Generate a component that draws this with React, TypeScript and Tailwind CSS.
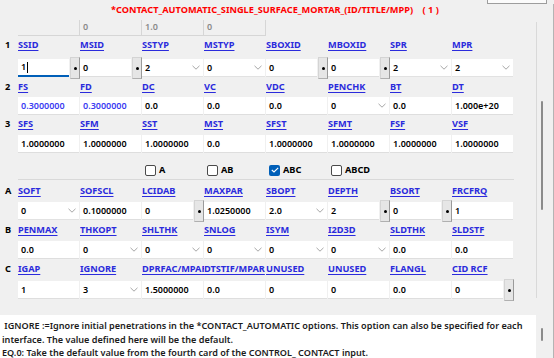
import React from 'react';

type Cell = {
  t: 'in' | 'sel';
  v: string;
  btn?: boolean;
  blue?: boolean;
  focus?: boolean;
};

type Row = {
  n: string;
  labels: string[];
  cells: Cell[];
  labelMt: string;
  inputMt: string;
};

const i = (v: string, extra: Partial<Cell> = {}): Cell => ({ t: 'in', v, ...extra });
const s = (v: string): Cell => ({ t: 'sel', v });

const topRows: Row[] = [
  {
    n: '1',
    labels: ['SSID', 'MSID', 'SSTYP', 'MSTYP', 'SBOXID', 'MBOXID', 'SPR', 'MPR'],
    cells: [i('1', { btn: true, focus: true }), i('0', { btn: true }), s('2'), s('0'), i('0', { btn: true }), i('0', { btn: true }), s('2'), s('2')],
    labelMt: 'mt-[2px]',
    inputMt: 'mt-[7px]',
  },
  {
    n: '2',
    labels: ['FS', 'FD', 'DC', 'VC', 'VDC', 'PENCHK', 'BT', 'DT'],
    cells: [i('0.3000000', { blue: true }), i('0.3000000', { blue: true }), i('0.0'), i('0.0'), i('0.0'), s('0'), i('0.0'), i('1.000e+20')],
    labelMt: 'mt-[3px]',
    inputMt: 'mt-[3px]',
  },
  {
    n: '3',
    labels: ['SFS', 'SFM', 'SST', 'MST', 'SFST', 'SFMT', 'FSF', 'VSF'],
    cells: [i('1.0000000'), i('1.0000000'), i('1.0000000'), i('0.0'), i('1.0000000'), i('1.0000000'), i('1.0000000'), i('1.0000000')],
    labelMt: 'mt-[2px]',
    inputMt: 'mt-[4px]',
  },
];

const optRows: Row[] = [
  {
    n: 'A',
    labels: ['SOFT', 'SOFSCL', 'LCIDAB', 'MAXPAR', 'SBOPT', 'DEPTH', 'BSORT', 'FRCFRQ'],
    cells: [s('0'), i('0.1000000'), i('0', { btn: true }), i('1.0250000'), s('2.0'), i('2', { btn: true }), i('0', { btn: true }), i('1')],
    labelMt: 'mt-[4px]',
    inputMt: 'mt-[4px]',
  },
  {
    n: 'B',
    labels: ['PENMAX', 'THKOPT', 'SHLTHK', 'SNLOG', 'ISYM', 'I2D3D', 'SLDTHK', 'SLDSTF'],
    cells: [i('0.0'), s('0'), s('0'), s('0'), s('0'), s('0'), i('0.0'), i('0.0')],
    labelMt: 'mt-[3px]',
    inputMt: 'mt-[4px]',
  },
  {
    n: 'C',
    labels: ['IGAP', 'IGNORE', 'DPRFAC/MPAR', 'DTSTIF/MPAR', 'UNUSED', 'UNUSED', 'FLANGL', 'CID RCF'],
    cells: [i('1'), s('3'), i('1.5000000'), i('0.0'), i('0'), i('0'), i('0.0'), i('0', { btn: true })],
    labelMt: 'mt-[3px]',
    inputMt: 'mt-[5px]',
  },
];

function Chevron() {
  return (
    <svg width="8" height="5" viewBox="0 0 8 5" fill="none">
      <path d="M0.5 0.8 L4 4.2 L7.5 0.8" stroke="#a6a6a6" strokeWidth="1" />
    </svg>
  );
}

function DotButton() {
  return (
    <div className="w-[10px] h-[22px] shrink-0 bg-[#e6e6e6] border border-[#d4d4d4] border-r-[#9a9a9a] border-b-[#b0b0b0] flex items-center justify-center">
      <span className="w-[3px] h-[3px] rounded-full bg-black" />
    </div>
  );
}

function Field({ cell }: { cell: Cell }) {
  if (cell.t === 'sel') {
    return (
      <div className="w-[61px] mr-[1px] h-[18px] bg-white border-b border-[#e2e2e2] flex items-center justify-between pl-[3px] pr-[3px]">
        <span className="text-black">{cell.v}</span>
        <Chevron />
      </div>
    );
  }
  return (
    <div className="w-[62px] flex items-center">
      <div
        className={`${cell.btn ? 'w-[51px]' : 'w-[61px]'} h-[18px] bg-white flex items-center pl-[3px] ${
          cell.focus ? 'border-b-2 border-[#005fb8]' : 'border-b border-[#dedede]'
        } ${cell.blue ? 'text-[#3b3bf2]' : 'text-black'}`}
      >
        <span>{cell.v}</span>
        {cell.focus && <span className="w-[1px] h-[11px] bg-black ml-[1px]" />}
      </div>
      {cell.btn && (
        <div className="ml-[1px]">
          <DotButton />
        </div>
      )}
    </div>
  );
}

function CardRow({ row }: { row: Row }) {
  return (
    <div>
      <div className={`${row.labelMt} flex h-[14px] leading-[14px] text-[9.2px]`}>
        <div className="w-[18px] pl-[5px] font-bold text-black">{row.n}</div>
        {row.labels.map((l, k) => (
          <div key={k} className="w-[62px] overflow-hidden whitespace-nowrap font-bold text-[#2b2bdc]">
            <span className="underline underline-offset-[2px]">{l}</span>
          </div>
        ))}
      </div>
      <div className={`${row.inputMt} flex h-[18px] items-center pl-[18px] font-semibold`}>
        {row.cells.map((c, k) => (
          <Field key={k} cell={c} />
        ))}
      </div>
    </div>
  );
}

function Check({ label, checked }: { label: string; checked?: boolean }) {
  return (
    <div className="w-[62px] flex items-center gap-[3px] pl-[2px]">
      {checked ? (
        <span className="w-[11px] h-[11px] rounded-[2px] bg-[#005fb8] flex items-center justify-center">
          <svg width="8" height="6" viewBox="0 0 8 6" fill="none">
            <path d="M0.8 3 L3 5 L7.2 0.8" stroke="white" strokeWidth="1.1" />
          </svg>
        </span>
      ) : (
        <span className="w-[11px] h-[11px] rounded-[2px] border border-[#4a4a4a] bg-white" />
      )}
      <span className="font-bold text-black">{label}</span>
    </div>
  );
}

export default function App() {
  return (
    <div className="w-[554px] h-[358px] bg-[#f0f0f0] overflow-hidden flex flex-col font-['Noto_Sans',sans-serif] text-[9px]">
      <div className="h-[4px] flex shrink-0">
        <div className="ml-[487px] w-[60px] h-[4px] bg-[#fbfbfb] border-x border-b border-[#9d9d9d]" />
      </div>
      <div className="flex h-[354px]">
        <div className="w-[536px] flex flex-col">
          <div className="h-[16px] leading-[12px] pl-[111px] text-[9.2px] font-bold text-[#ff0000] whitespace-pre">
            {'*CONTACT_AUTOMATIC_SINGLE_SURFACE_MORTAR_(ID/TITLE/MPP)    ( 1 )'}
          </div>
          <div className="h-[16px] flex pl-[18px] font-semibold text-[#8a8a8a]">
            {['', '0', '1.0', '0'].map((v, k) => (
              <div key={k} className="w-[62px] h-[16px] border-r border-b border-[#d6d6d6] pl-[3px] leading-[14px]">
                {v}
              </div>
            ))}
          </div>
          {topRows.map((r) => (
            <CardRow key={r.n} row={r} />
          ))}
          <div className="mt-[11px] h-[12px] flex pl-[143px] text-[9.2px]">
            <Check label="A" />
            <Check label="AB" />
            <Check label="ABC" checked />
            <Check label="ABCD" />
          </div>
          <div className="mt-[3px] ml-[18px] w-[496px] h-[1px] bg-[#d9d9d9]" />
          {optRows.map((r) => (
            <CardRow key={r.n} row={r} />
          ))}
          <div className="mt-[16px] h-[43px] bg-white pl-[2px] pt-[4px] leading-[13.5px] text-[9.1px] font-semibold text-[#1b1b1b] whitespace-pre">
            <div>{' IGNORE :=Ignore initial penetrations in the *CONTACT_AUTOMATIC options. This option can also be specified for each'}</div>
            <div>interface. The value defined here will be the default.</div>
            <div>EQ.0: Take the default value from the fourth card of the CONTROL_ CONTACT input.</div>
          </div>
        </div>
        <div className="w-[18px] flex flex-col border-r border-[#b4b4b4]">
          <div className="h-[18px]" />
          <div className="h-[276px] border-l border-[#d9d9d9] pl-[4px]">
            <div className="mt-[79px] w-[2px] h-[109px] rounded-full bg-[#8b8b8b]" />
          </div>
          <div className="h-[17px]" />
          <div className="h-[43px] pl-[5px]">
            <div className="mt-[13px] w-[2px] h-[13px] rounded-full bg-[#8b8b8b]" />
          </div>
        </div>
      </div>
    </div>
  );
}
